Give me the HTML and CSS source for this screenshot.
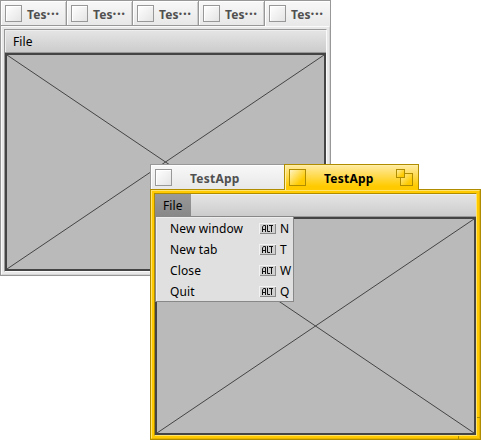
FILE: index.html
```html
<!DOCTYPE html>
<html lang="en">
<head>
<meta charset="utf-8">
<title>TestApp</title>
<link rel="stylesheet" href="styles.css">
</head>
<body>
<main class="desktop">
  <section class="window back">
    <div class="tabs">
      <div class="tab small"><i class="close"></i><b>Tes<span class="dots">···</span></b></div>
      <div class="tab small"><i class="close"></i><b>Tes<span class="dots">···</span></b></div>
      <div class="tab small"><i class="close"></i><b>Tes<span class="dots">···</span></b></div>
      <div class="tab small"><i class="close"></i><b>Tes<span class="dots">···</span></b></div>
      <div class="tab small front"><i class="close"></i><b>Tes<span class="dots">···</span></b></div>
    </div>
    <div class="frame"><div class="ring"><div class="content">
      <nav class="menubar"><span class="menu-title">File</span></nav>
      <div class="view"><svg viewBox="0 0 317 214"><path d="M0 0L317 214M0 214L317 0"/></svg></div>
    </div></div></div>
  </section>
  <section class="window active">
    <div class="tabs">
      <div class="tab wide"><i class="close"></i><b>TestApp</b></div>
      <div class="tab wide front"><i class="close"></i><b>TestApp</b><span class="zoom"><i class="zoom-large"></i><i class="zoom-small"></i></span></div>
    </div>
    <div class="frame"><div class="ring"><div class="content">
      <nav class="menubar"><span class="menu-title open">File</span></nav>
      <div class="view"><svg viewBox="0 0 317 214"><path d="M0 0L317 214M0 214L317 0"/></svg></div>
    </div></div></div>
    <i class="grip grip-right"></i><i class="grip grip-bottom"></i>
    <div class="menu">
      <div class="item"><span>New window</span><kbd><svg viewBox="0 0 17 11"><path d="M3.5 9V4L4.5 2.5H6.5V9M3.5 6.5H6.5M8.5 2V8.5H11M10 2.5H14M12.5 2.5V9"/></svg></kbd><em>N</em></div>
      <div class="item"><span>New tab</span><kbd><svg viewBox="0 0 17 11"><path d="M3.5 9V4L4.5 2.5H6.5V9M3.5 6.5H6.5M8.5 2V8.5H11M10 2.5H14M12.5 2.5V9"/></svg></kbd><em>T</em></div>
      <div class="item"><span>Close</span><kbd><svg viewBox="0 0 17 11"><path d="M3.5 9V4L4.5 2.5H6.5V9M3.5 6.5H6.5M8.5 2V8.5H11M10 2.5H14M12.5 2.5V9"/></svg></kbd><em>W</em></div>
      <div class="item"><span>Quit</span><kbd><svg viewBox="0 0 17 11"><path d="M3.5 9V4L4.5 2.5H6.5V9M3.5 6.5H6.5M8.5 2V8.5H11M10 2.5H14M12.5 2.5V9"/></svg></kbd><em>Q</em></div>
    </div>
  </section>
</main>
</body>
</html>
```

FILE: styles.css
```css
* { box-sizing: border-box; }
body { margin: 0; background: #fff; font: 12px/21px "Noto Sans", sans-serif; letter-spacing: 0.12px; color: #000; }
.desktop { position: relative; width: 481px; height: 440px; overflow: hidden; }
.window {
  --edge: #989898; --hi: #fafafa; --fill: #e8e8e8; --low: #d4d4d4;
  position: absolute; width: 331px; height: 276px; display: flex; flex-direction: column;
}
.back { left: 0; top: 0; }
.active { --edge: #b08c00; --hi: #ffe470; --fill: #ffcb00; --low: #e8b400; left: 150px; top: 164px; }
.tabs { display: flex; height: 25px; }
.tab {
  display: flex; align-items: center; height: 25px; padding-left: 4px; color: #505050;
  border: solid #989898; border-width: 1px 0 0 1px;
  background: linear-gradient(#f8f8f8, #e8e8e8); box-shadow: inset 1px 1px #fff;
}
.tab b { line-height: 20px; padding-top: 3px; letter-spacing: 0.25px; }
.small { width: 66px; box-shadow: inset 1px 1px #fff, inset -1px 0 #ccc; }
.small b { margin-left: 5px; white-space: nowrap; letter-spacing: 0.1px; }
.dots { letter-spacing: 0.6px; font-size: 13.5px; line-height: 1; }
.small.front { width: 67px; border-right-width: 1px; height: 26px; position: relative; box-shadow: inset 1px 1px #fff; }
.small.front .close, .small.front b, .wide.front .close, .wide.front b { margin-bottom: 1px; }
.wide { width: 134px; }
.wide b { flex: 1; padding-left: 18px; }
.active .front {
  width: 135px; height: 26px; position: relative; color: #000; border-color: #b08c00; border-right-width: 1px;
  background: linear-gradient(#ffeba2, #ffcb00 85%); box-shadow: inset 1px 1px #fff0a8;
}
.close { width: 17px; height: 17px; border: 1px solid #989898; background: linear-gradient(135deg, #fff, #e4e4e4); box-shadow: inset 1px 1px #fff; }
.active .front .close { border-color: #b08c00; background: linear-gradient(135deg, #fff4c4, #ffcb00 75%); box-shadow: none; }
.zoom { position: relative; width: 17px; height: 17px; margin: 0 5px 1px 0; }
.zoom-large, .zoom-small { position: absolute; border: 1px solid #b08c00; background: linear-gradient(135deg, #ffeda0, #ffcb00 75%); }
.zoom-large { left: 4px; top: 4px; width: 13px; height: 13px; }
.zoom-small { left: 0; top: 0; width: 9px; height: 9px; }
.frame { flex: 1; display: flex; border: 1px solid var(--edge); background: var(--fill); }
.ring { flex: 1; display: flex; padding: 2px; border: 1px solid; border-color: var(--hi) var(--low) var(--low) var(--hi); }
.content { flex: 1; display: flex; flex-direction: column; border: 1px solid; border-color: var(--edge) var(--hi) var(--hi) var(--edge); }
.menubar { height: 23px; display: flex; border-bottom: 1px solid #999; background: linear-gradient(#e5e5e5, #ccc); box-shadow: inset 1px 1px #eee; }
.menu-title { width: 36px; padding-left: 8px; line-height: 23px; }
.open { background: linear-gradient(#999, #888); }
.view { flex: 1; border: 2px solid #444; background: #bababa; }
.view svg { display: block; width: 100%; height: 100%; }
.view path { stroke: #444; stroke-width: 1; fill: none; }
.grip { position: absolute; background: #b08c00; }
.grip-right { right: 0; bottom: 22px; width: 4px; height: 1px; }
.grip-bottom { right: 22px; bottom: 0; width: 1px; height: 4px; }
.menu { position: absolute; left: 5px; top: 52px; width: 139px; height: 86px; border: 1px solid #888; background: #e0e0e0; box-shadow: inset 1px 1px #eee; }
.item { display: flex; align-items: center; height: 21px; padding-left: 14px; }
.item span { width: 89px; padding-top: 1px; }
.item kbd { display: block; width: 17px; height: 11px; margin-top: 1px; background: #d0d0d0; box-shadow: inset 1px 1px #f2f2f2, inset -1px -1px #888; }
.item kbd svg { display: block; width: 17px; height: 11px; }
.item kbd path { fill: none; stroke: #111; stroke-width: 1; }
.item em { font-style: normal; margin-left: 4px; padding-top: 1px; }
```
